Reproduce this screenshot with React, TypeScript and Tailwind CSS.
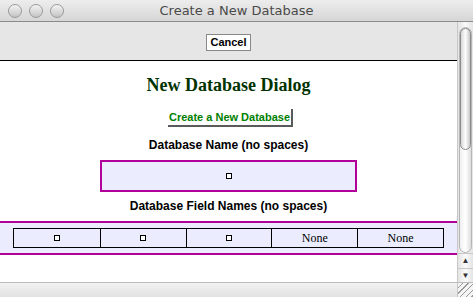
import React from "react";

const cells = ["box", "box", "box", "None", "None"];

function Box() {
  return <span className="inline-block h-[6px] w-[6px] border border-black bg-white" />;
}

function Light() {
  return (
    <span className="h-[14px] w-[14px] rounded-full border border-[#9a9a9a] bg-gradient-to-b from-[#f4f4f4] to-[#c4c4c4]" />
  );
}

export default function App() {
  return (
    <div className="flex h-[297px] w-[473px] flex-col overflow-hidden bg-white font-['Liberation_Sans',sans-serif]">
      <div className="relative flex h-[22px] items-center border-b border-[#8c8c8c] bg-gradient-to-b from-[#ededed] to-[#d6d6d6]">
        <div className="flex gap-[7px] pl-[8px]">
          <Light />
          <Light />
          <Light />
        </div>
        <span className="absolute left-0 right-0 text-center text-[13px] text-[#4a4a4a] font-['DejaVu_Sans',sans-serif]">
          Create a New Database
        </span>
      </div>

      <div className="flex flex-1">
        <div className="flex w-[457px] flex-col">
          <div className="flex h-[39px] items-center justify-center border-b border-black bg-[#e6e6e6] pt-[3px]">
            <button className="h-[17px] border border-[#888] bg-white px-[3px] text-[11px] font-bold leading-none text-black">
              Cancel
            </button>
          </div>

          <div className="flex flex-1 flex-col items-center bg-white">
            <h1 className="mt-[13px] font-['Liberation_Serif',serif] text-[18px] font-bold leading-[22px] text-[#003300]">
              New Database Dialog
            </h1>
            <button className="mt-[13px] ml-[4px] h-[18px] border-b-2 border-r-2 border-[#5a5a5a] bg-white px-[1px] text-[11px] font-bold leading-none text-[#008000]">
              Create a New Database
            </button>
            <p className="mt-[11px] text-[12px] font-bold leading-[14px] text-black">
              Database Name (no spaces)
            </p>
            <div className="mt-[8px] flex h-[32px] w-[257px] items-center justify-center border-2 border-[#b1009a] bg-[#ebedfe]">
              <Box />
            </div>
            <p className="mt-[7px] text-[12px] font-bold leading-[14px] text-black">
              Database Field Names (no spaces)
            </p>
            <div className="mt-[8px] w-full border-y-2 border-[#b1009a] bg-[#ebedfe] px-[13px] py-[5px]">
              <div className="grid h-[20px] grid-cols-5 border border-black">
                {cells.map((c, i) => (
                  <div
                    key={i}
                    className={`flex items-center justify-center font-['Liberation_Serif',serif] text-[12px] text-black ${i > 0 ? "border-l border-black" : ""}`}
                  >
                    {c === "box" ? <Box /> : c}
                  </div>
                ))}
              </div>
            </div>
          </div>
        </div>

        <div className="flex w-[16px] flex-col border-l border-[#c8c8c8] bg-gradient-to-r from-[#e4e4e4] via-[#fafafa] to-[#e4e4e4]">
          <div className="mx-[1px] mt-[5px] flex h-[226px] flex-col rounded-full border border-[#b5b5b5] bg-gradient-to-r from-[#f0f0f0] via-white to-[#dcdcdc]">
            <div className="h-[122px] rounded-full border border-[#8a8a8a] bg-gradient-to-r from-[#d8d8d8] via-[#fdfdfd] to-[#c8c8c8]" />
          </div>
          <div className="mt-auto flex h-[15px] items-center justify-center border-t border-[#c8c8c8] text-[8px] text-[#333]">
            ▲
          </div>
          <div className="flex h-[14px] items-center justify-center border-t border-[#c8c8c8] text-[8px] text-[#333]">
            ▼
          </div>
        </div>
      </div>

      <div className="flex h-[15px] border-t border-[#bcbcbc] bg-gradient-to-b from-[#f2f2f2] to-[#e2e2e2]">
        <div className="flex-1" />
        <div className="w-[16px] border-l border-[#c8c8c8] bg-[repeating-linear-gradient(135deg,#f4f4f4_0px,#f4f4f4_3px,#9a9a9a_3px,#9a9a9a_4px)]" />
      </div>
    </div>
  );
}
